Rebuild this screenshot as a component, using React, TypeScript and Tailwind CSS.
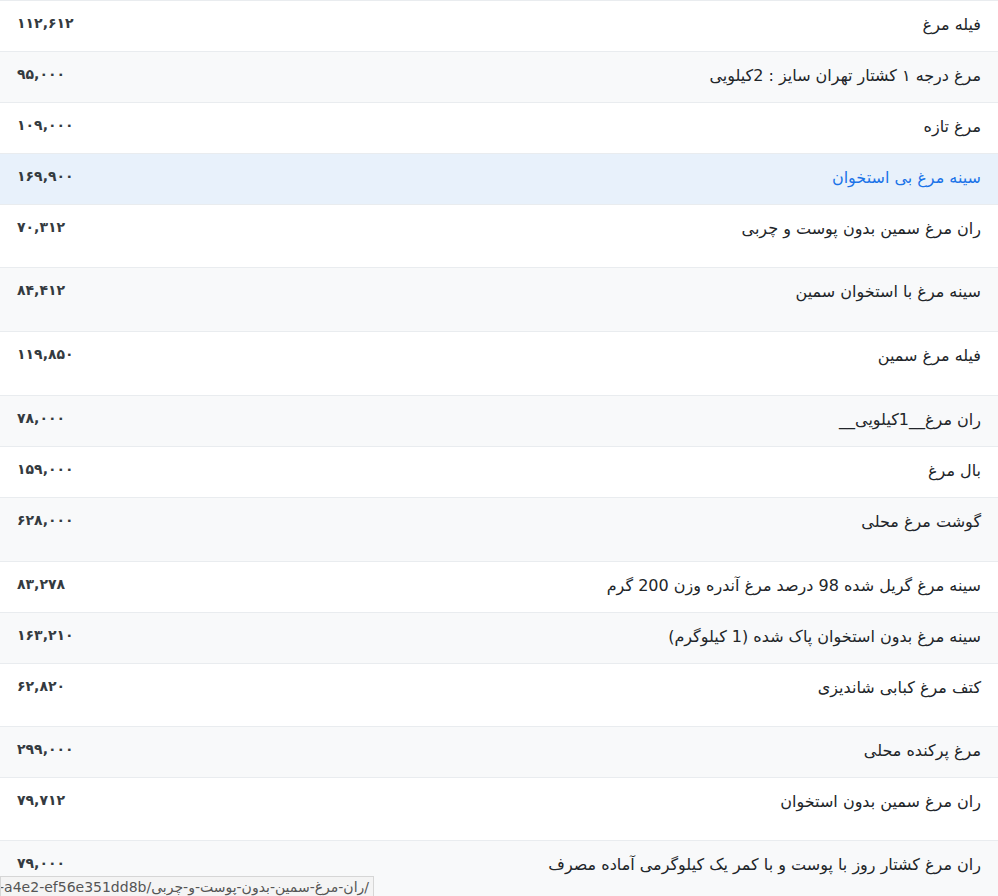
const rows: [string, string, number][] = [
  ["فیله مرغ", "۱۱۲,۶۱۲", 51],
  ["مرغ درجه ۱ کشتار تهران سایز : 2کیلویی", "۹۵,۰۰۰", 51],
  ["مرغ تازه", "۱۰۹,۰۰۰", 51],
  ["سینه مرغ بی استخوان", "۱۶۹,۹۰۰", 51],
  ["ران مرغ سمین بدون پوست و چربی", "۷۰,۳۱۲", 63],
  ["سینه مرغ با استخوان سمین", "۸۴,۴۱۲", 64],
  ["فیله مرغ سمین", "۱۱۹,۸۵۰", 64],
  ["ران مرغ__1کیلویی__", "۷۸,۰۰۰", 51],
  ["بال مرغ", "۱۵۹,۰۰۰", 51],
  ["گوشت مرغ محلی", "۶۲۸,۰۰۰", 64],
  ["سینه مرغ گریل شده 98 درصد مرغ آندره وزن 200 گرم", "۸۳,۲۷۸", 51],
  ["سینه مرغ بدون استخوان پاک شده (1 کیلوگرم)", "۱۶۳,۲۱۰", 51],
  ["کتف مرغ کبابی شاندیزی", "۶۲,۸۲۰", 63],
  ["مرغ پرکنده محلی", "۲۹۹,۰۰۰", 51],
  ["ران مرغ سمین بدون استخوان", "۷۹,۷۱۲", 63],
  ["ران مرغ کشتار روز با پوست و با کمر یک کیلوگرمی آماده مصرف", "۷۹,۰۰۰", 56],
];

export default function App() {
  return (
    <div className="relative w-[998px] h-[896px] overflow-hidden bg-white" style={{ fontFamily: '"DejaVu Sans", "Noto Sans", sans-serif' }}>
      <div className="flex flex-col border-t border-[#e9ecef]">
        {rows.map(([name, price, h], i) => {
          const hover = i === 3;
          const bg = hover ? "bg-[#e8f1fb]" : i % 2 === 1 ? "bg-[#f8f9fa]" : "bg-white";
          return (
            <div key={i} className={`flex justify-between items-start border-b border-[#e9ecef] px-[17px] pt-[12px] ${bg}`} style={{ height: h }}>
              <span className="text-[14px] font-semibold text-[#343a40] tracking-tight">{price}</span>
              <span dir="rtl" className={`text-[16px] ${hover ? "text-[#1a73e8]" : "text-[#212529]"}`}>{name}</span>
            </div>
          );
        })}
      </div>
      <div className="absolute left-0 top-[876px] w-[374px] h-[22px] bg-[#f4f4f4] border border-[#d6d6d6] text-[14px] text-[#555] whitespace-nowrap overflow-hidden flex justify-end pr-1 leading-[20px]">
        <span className="shrink-0">d2c1-a4e2-ef56e351dd8b/ران-مرغ-سمین-بدون-پوست-و-چربی/</span>
      </div>
    </div>
  );
}
